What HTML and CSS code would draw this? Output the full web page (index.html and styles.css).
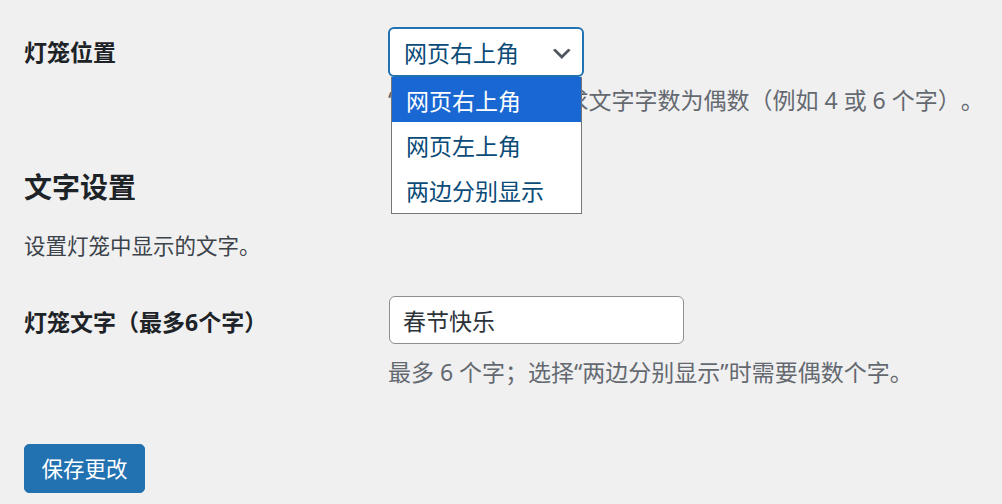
FILE: index.html
```html
<!DOCTYPE html>
<html lang="zh-CN">
<head>
<meta charset="utf-8">
<title>灯笼设置</title>
<link rel="stylesheet" href="styles.css">
</head>
<body>
<div class="wrap">
  <div class="row row-first">
    <div class="th">灯笼位置</div>
    <div class="td">
      <div class="select-wrap">
        <div class="select">
          <span>网页右上角</span>
          <svg class="chev" viewBox="0 0 20 20" aria-hidden="true"><path d="M5 6l5 5 5-5 2 1-7 7-7-7 2-1z"/></svg>
        </div>
        <ul class="dropdown">
          <li class="active">网页右上角</li>
          <li>网页左上角</li>
          <li>两边分别显示</li>
        </ul>
      </div>
      <p class="description">“两边分别显示”要求文字字数为偶数（例如 4 或 6 个字）。</p>
    </div>
  </div>

  <h2 class="section-title">文字设置</h2>
  <p class="intro">设置灯笼中显示的文字。</p>

  <div class="row row-second">
    <div class="th th-second">灯笼文字（最多6个字）</div>
    <div class="td">
      <div class="input">春节快乐</div>
      <p class="description desc-second">最多 6 个字；选择“两边分别显示”时需要偶数个字。</p>
    </div>
  </div>

  <div class="submit">
    <button class="button-primary" type="button">保存更改</button>
  </div>
</div>
</body>
</html>
```

FILE: styles.css
```css
html, body {
  margin: 0;
  padding: 0;
}

body {
  background: #f0f0f1;
  font-family: "Noto Sans", "Noto Sans CJK SC", sans-serif;
  color: #1d2327;
  text-spacing-trim: space-all;
}

.wrap {
  padding: 0 0 0 24px;
}

.row {
  display: grid;
  grid-template-columns: 364px 1fr;
}

.row-first {
  padding-top: 27px;
}

.th {
  font-size: 23px;
  font-weight: 700;
  line-height: 30px;
  padding-top: 10px;
  color: #1d2327;
  white-space: nowrap;
}

.th-second {
  padding-top: 11px;
}

.td {
  min-width: 0;
}

.select-wrap {
  position: relative;
  width: 196px;
}

.select {
  box-sizing: border-box;
  height: 50px;
  border: 2px solid #2271b1;
  border-radius: 6px;
  background: #fff;
  display: flex;
  align-items: center;
  padding: 0 7px 0 14px;
  color: #0a4b78;
  font-size: 23px;
}

.chev {
  margin-left: auto;
  width: 25.6px;
  height: 25.6px;
  margin-top: 4px;
  fill: #50575e;
}

.dropdown {
  position: absolute;
  left: 3px;
  top: 50px;
  width: 191px;
  box-sizing: border-box;
  margin: 0;
  padding: 0;
  list-style: none;
  background: #fff;
  border: 1px solid #767676;
  border-top: 0;
  z-index: 2;
}

.dropdown li {
  height: 45.33px;
  display: flex;
  align-items: center;
  padding-left: 14px;
  font-size: 23px;
  color: #0a4b78;
}

.dropdown li.active {
  background: #1967d2;
  color: #fff;
}

.description {
  margin: 5.75px 0 0;
  font-size: 23px;
  line-height: 34.5px;
  color: #646970;
  white-space: nowrap;
}

.desc-second {
  margin-top: 10.75px;
}

.section-title {
  margin: 51.5px 0 0;
  font-size: 28px;
  line-height: 36.4px;
  font-weight: 700;
  color: #1d2327;
}

.intro {
  margin: 24.8px 0 0;
  font-size: 21.5px;
  line-height: 32px;
  color: #3c434a;
}

.row-second {
  margin-top: 34px;
}

.input {
  box-sizing: border-box;
  width: 295px;
  height: 48px;
  margin-left: 1px;
  border: 1px solid #8c8f94;
  border-radius: 6px;
  background: #fff;
  padding: 0 13px;
  display: flex;
  align-items: center;
  font-size: 23px;
  color: #2c3338;
}

.submit {
  margin-top: 54.75px;
}

.button-primary {
  box-sizing: border-box;
  height: 49px;
  padding: 0 16.5px;
  border: 1px solid #2271b1;
  border-radius: 5px;
  background: #2271b1;
  color: #fff;
  font-family: inherit;
  font-size: 21.5px;
  line-height: 1;
  cursor: pointer;
}
```
